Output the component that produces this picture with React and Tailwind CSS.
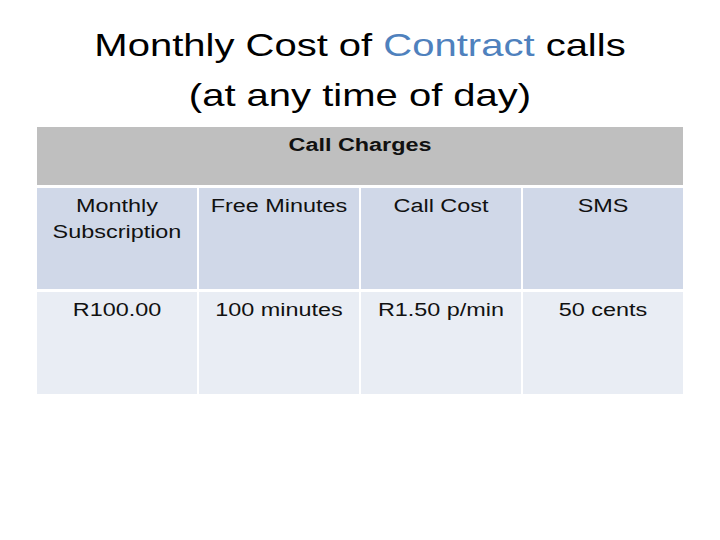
export default function App() {
  const cell = "pt-[6px] text-center text-[18px] leading-[24px] text-[#111]";
  return (
    <div className="w-[720px] h-[540px] bg-white overflow-hidden" style={{ fontFamily: '"Liberation Sans", Arial, sans-serif' }}>
      <div className="pt-[20px] text-center text-[32px] leading-[50px] text-black scale-x-[1.25]">
        <div>
          Monthly Cost of <span className="text-[#4f81bd]">Contract</span> calls
        </div>
        <div>(at any time of day)</div>
      </div>
      <div className="mt-[7px] ml-[37px] w-[646px] grid grid-cols-4 gap-x-[2px] gap-y-[3px]">
        <div className={`col-span-4 h-[58px] bg-[#bfbfbf] ${cell} font-bold`}>
          <span className="inline-block scale-x-[1.3]">Call Charges</span>
        </div>
        {[
          ["Monthly", "Subscription"],
          ["Free Minutes"],
          ["Call Cost"],
          ["SMS"],
        ].map((lines, i) => (
          <div key={i} className={`h-[101px] bg-[#d0d8e8] ${cell}`}>
            {lines.map((l, j) => (
              <div key={j} className="scale-x-[1.3] leading-[27px] -mt-[1px]">{l}</div>
            ))}
          </div>
        ))}
        {["R100.00", "100 minutes", "R1.50 p/min", "50 cents"].map((t, i) => (
          <div key={i} className={`h-[102px] bg-[#e9edf4] ${cell}`}>
            <div className="scale-x-[1.3]">{t}</div>
          </div>
        ))}
      </div>
    </div>
  );
}
